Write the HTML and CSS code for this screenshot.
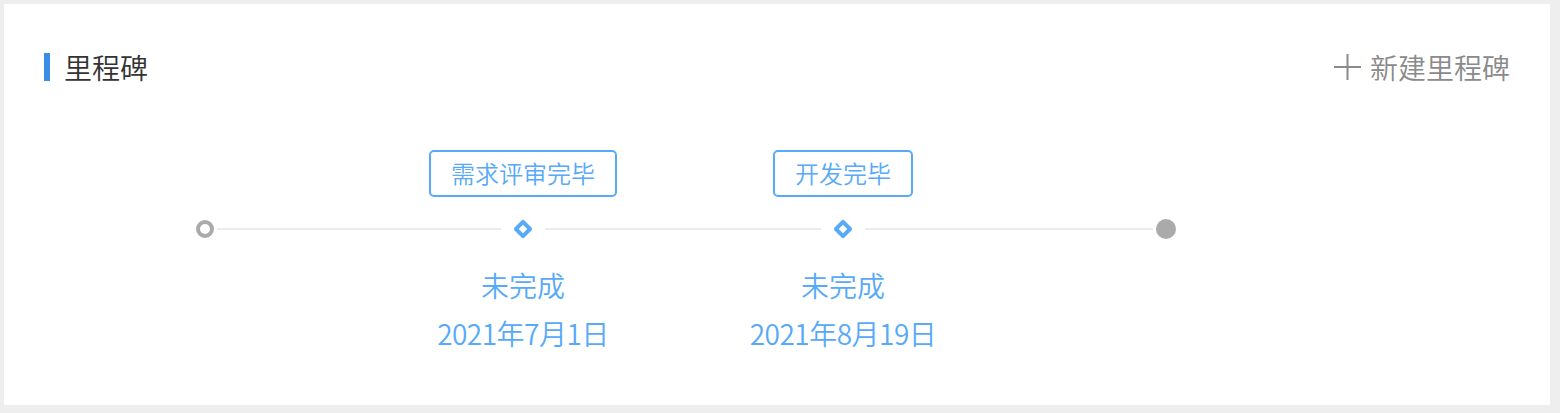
FILE: index.html
```html
<!DOCTYPE html>
<html lang="zh-CN">
<head>
<meta charset="utf-8">
<title>里程碑</title>
<link rel="stylesheet" href="styles.css">
</head>
<body>
<div class="card">
  <div class="header">
    <div class="title">里程碑</div>
    <div class="add">
      <svg class="plus" width="27" height="26" viewBox="0 0 27 26" aria-hidden="true">
        <path d="M0 13H27M13.5 0V26" stroke="#8a8a8a" stroke-width="2" fill="none"/>
      </svg>
      <span>新建里程碑</span>
    </div>
  </div>
  <div class="timeline">
    <div class="tag t1">需求评审完毕</div>
    <div class="tag t2">开发完毕</div>

    <div class="dot-start"></div>
    <div class="seg seg1"></div>
    <div class="node n1"><span class="ln"></span><span class="diamond"></span><span class="ln"></span></div>
    <div class="seg seg2"></div>
    <div class="node n2"><span class="ln"></span><span class="diamond"></span><span class="ln"></span></div>
    <div class="seg seg3"></div>
    <div class="dot-end"></div>

    <div class="label l1"><div>未完成</div><div class="date">2021年7月1日</div></div>
    <div class="label l2"><div>未完成</div><div class="date">2021年8月19日</div></div>
  </div>
</div>
</body>
</html>
```
FILE: styles.css
```css
* { box-sizing: border-box; }
html, body { margin: 0; padding: 0; }
body {
  background: #eeeeee;
  padding: 4px 10px 8px 4px;
  font-family: "Noto Sans CJK SC", "Microsoft YaHei", sans-serif;
  font-weight: 350;
}
.card {
  background: #fff;
  height: 401px;
  padding: 49px 40px 0 40px;
}
.header {
  display: flex;
  justify-content: space-between;
  align-items: center;
  height: 28px;
}
.title {
  border-left: 6px solid #3a8ee6;
  padding-left: 14px;
  font-size: 28px;
  line-height: 28px;
  height: 28px;
  color: #333;
}
.add {
  display: flex;
  align-items: center;
  gap: 9px;
  font-size: 28px;
  line-height: 28px;
  color: #8a8a8a;
}
.plus { display: block; }

.timeline {
  margin-top: 69px;
  margin-left: 152px;
  display: grid;
  grid-template-columns: 18px 209px 200px 120px 200px 213px 20px;
  grid-template-rows: 47px 20px auto;
  row-gap: 22px;
  align-items: center;
}
.tag {
  grid-row: 1;
  justify-self: center;
  height: 47px;
  border: 2px solid #58aaf8;
  border-radius: 5px;
  padding: 0 20px;
  font-size: 24px;
  line-height: 42px;
  color: #58aaf8;
  white-space: nowrap;
}
.t1 { grid-column: 3; }
.t2 { grid-column: 5; }

.dot-start {
  grid-row: 2; grid-column: 1;
  width: 18px; height: 18px;
  border: 4px solid #aaaaaa;
  border-radius: 50%;
}
.dot-end {
  grid-row: 2; grid-column: 7;
  width: 20px; height: 20px;
  background: #aaaaaa;
  border-radius: 50%;
}
.seg, .ln {
  height: 2px;
  background: #ebebeb;
}
.seg { grid-row: 2; }
.seg1 { grid-column: 2; margin-left: 3px; }
.seg2 { grid-column: 4; }
.seg3 { grid-column: 6; margin-right: 3px; }
.node {
  grid-row: 2;
  display: flex;
  align-items: center;
  height: 20px;
}
.n1 { grid-column: 3; }
.n2 { grid-column: 5; }
.ln { flex: 1; }
.diamond {
  width: 14px; height: 14px;
  margin: 0 15px;
  border: 4px solid #58aaf8;
  border-radius: 2px;
  transform: rotate(45deg);
}
.label {
  grid-row: 3;
  justify-self: center;
  text-align: center;
  white-space: nowrap;
  font-size: 28px;
  line-height: 48px;
  color: #58aaf8;
}
.date { letter-spacing: -0.5px; }
.l1 { grid-column: 3; }
.l2 { grid-column: 5; }
```
